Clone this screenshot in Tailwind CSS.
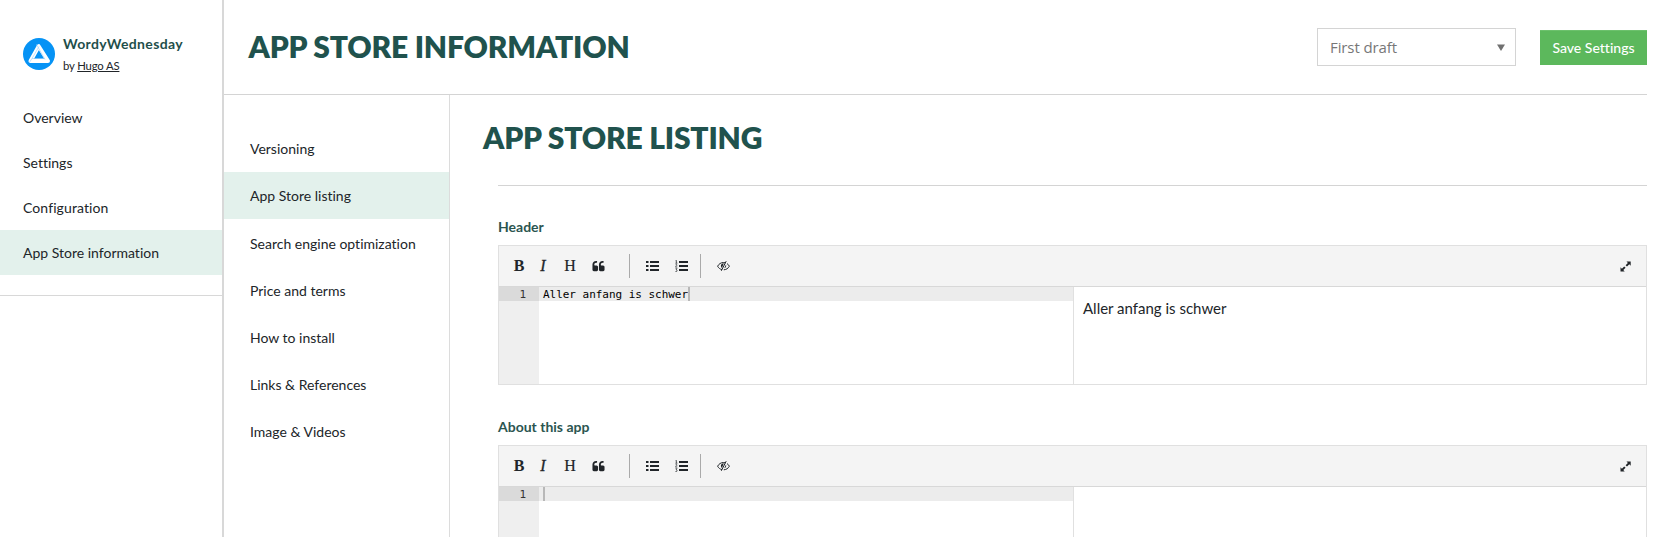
<!DOCTYPE html>
<html lang="en">
<head>
<meta charset="utf-8">
<title>App Store information</title>
<script src="https://cdn.jsdelivr.net/npm/@tailwindcss/browser@4"></script>
</head>
<body class="bg-white font-['Lato',sans-serif] text-[14px] leading-5 text-[#212529] [font-variant-ligatures:none]">
<svg class="hidden">
  <symbol id="quote" viewBox="0 0 1792 1792"><path d="M832 960v384q0 80-56 136t-136 56h-384q-80 0-136-56t-56-136v-704q0-104 40.5-198.5t109.5-163.5 163.5-109.5 198.5-40.5h64q26 0 45 19t19 45v128q0 26-19 45t-45 19h-64q-106 0-181 75t-75 181v32q0 40 28 68t68 28h224q80 0 136 56t56 136zm896 0v384q0 80-56 136t-136 56h-384q-80 0-136-56t-56-136v-704q0-104 40.5-198.5t109.5-163.5 163.5-109.5 198.5-40.5h64q26 0 45 19t19 45v128q0 26-19 45t-45 19h-64q-106 0-181 75t-75 181v32q0 40 28 68t68 28h224q80 0 136 56t56 136z"/></symbol>
  <symbol id="ul" viewBox="0 0 13 12"><path d="M0 1h2.500v2H0zM0 5h2.500v2H0zM0 9h2.500v2H0zM4 1h9v2H4zM4 5h9v2H4zM4 9h9v2H4z"/></symbol>
  <symbol id="ol" viewBox="0 0 13 12"><path d="M4 1h9v2H4zM4 5h9v2H4zM4 9h9v2H4z"/><path fill="none" stroke="currentColor" stroke-width=".7" d="M.5.8 1.400.3v2.900M.4 3.200h2M.5 4.900c.5-.7 1.600-.5 1.600.2 0 .7-1.600 1-1.600 2h1.800M.5 8.700h1.600l-.9 1.100c1.300 0 1.200 1.800 0 1.800H.4"/></symbol>
  <symbol id="eye" viewBox="0 0 13 12"><path fill="none" stroke="currentColor" stroke-width="1" d="M5 9.600C3 9.200 1.500 7.900.6 6.200 1.900 3.900 4 2.500 6.500 2.500c.7 0 1.300.1 1.900.3M10 3.600c1 .6 1.800 1.500 2.400 2.600-1.200 2.200-3.200 3.500-5.600 3.600M9.200 1.200 4.300 10.800"/><path d="M3.900 5.700c0-1.500 1.200-2.500 3-2.500L4.800 7.900c-.6-.6-.9-1.300-.9-2.200zM9 4.400c.6 1.600 0 3.200-1.700 3.900z"/></symbol>
  <symbol id="expand" viewBox="0 0 11 11"><path d="M6.500.5h4.200v4.200L9.300 3.300 7 5.600 5.600 4.200 7.900 1.900zM4.700 10.500H.5V6.300L1.900 7.700 4.200 5.400 5.600 6.800 3.300 9.100z"/></symbol>
</svg>
<div class="flex h-[537px] w-[1661px] overflow-hidden">
  <aside class="w-56 shrink-0 border-r-2 border-[#d8d8d8]">
    <div class="flex h-[95px] gap-2 pt-[34px] pl-[23px]">
      <svg class="mt-1 size-8" viewBox="0 0 32 32"><circle cx="16" cy="16" r="16" fill="#0693f5"/><path d="M15.700 8.200 7.500 23H25Z" fill="none" stroke="#fff" stroke-width="4" stroke-linejoin="round"/><path d="M13.500 6.500 22 21.500M6 25 9 20.500H21.500M9 20.500 16 8.500" fill="none" stroke="#a6d5fb" stroke-width=".7"/></svg>
      <div>
        <div class="h-5 font-bold tracking-[0.35px] text-[#1f4f4b]">WordyWednesday</div>
        <div class="mt-[2px] text-[11.3px] tracking-[-0.15px]">by <span class="underline">Hugo AS</span></div>
      </div>
    </div>
    <nav class="border-b border-[#d8d8d8] pb-5">
      <a class="flex h-[45px] items-center pl-[23px]">Overview</a>
      <a class="flex h-[45px] items-center pl-[23px]">Settings</a>
      <a class="flex h-[45px] items-center pl-[23px] tracking-[0.1px]">Configuration</a>
      <a class="flex h-[45px] items-center bg-[#e3f1ec] pl-[23px]">App Store information</a>
    </nav>
  </aside>
  <main class="mr-[14px] flex min-w-0 grow flex-col">
    <header class="flex h-[95px] shrink-0 items-center border-b border-[#d4d4d4] pl-[24.500px]">
      <h1 class="-mt-[3px] grow text-[30px] leading-10 font-extrabold tracking-[-0.2px] text-[#20524d]">APP STORE INFORMATION</h1>
      <div class="mr-6 flex h-[38px] w-[199px] items-center justify-between border border-[#d4d4d4] pr-[10px] pl-3 font-['Open_Sans',sans-serif] text-[15px] tracking-[-0.1px] text-[#777]">
        <span>First draft</span>
        <svg class="h-[7px] w-2" viewBox="0 0 8 7" fill="#707070"><path d="M0 .5h8L4 7z"/></svg>
      </div>
      <button class="h-[35px] w-[107px] border-t border-[#6cc16c] bg-[#5cb85c] text-[14px] font-medium text-white">Save Settings</button>
    </header>
    <div class="flex min-h-0 grow">
      <nav class="w-[226px] shrink-0 border-r border-[#dcdcdc] pt-[30px]">
        <a class="flex h-[47px] items-center pl-[26px]">Versioning</a>
        <a class="mb-px flex h-[47px] items-center bg-[#e3f1ec] pl-[26px]">App Store listing</a>
        <a class="flex h-[47px] items-center pl-[26px]">Search engine optimization</a>
        <a class="flex h-[47px] items-center pl-[26px]">Price and terms</a>
        <a class="flex h-[47px] items-center pl-[26px]">How to install</a>
        <a class="flex h-[47px] items-center pl-[26px]">Links &amp; References</a>
        <a class="flex h-[47px] items-center pl-[26px]">Image &amp; Videos</a>
      </nav>
      <section class="grow pl-12">
        <h2 class="-ml-[15px] h-[90px] pt-[22px] text-[30px] leading-10 font-extrabold tracking-[-0.2px] text-[#20524d]">APP STORE LISTING</h2>
        <div class="h-8 border-t border-[#d4d4d4]"></div>
        <label class="block h-7 font-bold text-[#2b5550]">Header</label>
        <div class="mb-8 h-[140px] border border-[#e0e0e0]">
          <div class="flex h-[41px] items-center border-b border-[#d8d8d8] bg-[#f4f4f4] font-['Liberation_Serif',serif] text-[16px]">
            <b class="ml-[8px] w-6 text-center">B</b><span class="w-6 text-center italic [-webkit-text-stroke:0.3px_currentColor]">I</span><span class="w-[30px] text-center [-webkit-text-stroke:0.2px_currentColor]">H</span>
            <svg class="ml-[7px] size-[13px]" fill="currentColor"><use href="#quote"/></svg>
            <i class="ml-[24px] h-6 w-px bg-[#aaa]"></i>
            <svg class="ml-4 h-3 w-[13px]" fill="currentColor"><use href="#ul"/></svg>
            <svg class="ml-[16px] h-3 w-[13px]" fill="currentColor"><use href="#ol"/></svg>
            <i class="ml-[12px] h-6 w-px bg-[#aaa]"></i>
            <svg class="ml-[16px] h-3 w-[13px]" fill="currentColor"><use href="#eye"/></svg>
            <svg class="mr-[15px] ml-auto size-[11px]" fill="currentColor"><use href="#expand"/></svg>
          </div>
          <div class="flex h-[97px]">
            <div class="w-10 bg-[#efefef] font-['DejaVu_Sans_Mono',monospace] text-[11px] leading-[15px]"><div class="h-[14px] bg-[#dadada] pr-[13px] text-right text-[#333]">1</div></div>
            <div class="w-[534px] font-['DejaVu_Sans_Mono',monospace] text-[11px] leading-[15px] tracking-[-0.03px] text-black"><div class="flex h-[14px] bg-[#ececec] pl-1"><span>Aller anfang is schwer</span><i class="h-[14px] w-[2px] bg-[#b8b8b8]"></i></div></div>
            <div class="grow border-l border-[#e0e0e0] pt-[11px] pl-[9px] text-[15px]">Aller anfang is schwer</div>
          </div>
        </div>
        <label class="block h-7 font-bold text-[#2b5550]">About this app</label>
        <div class="h-[140px] border border-[#e0e0e0]">
          <div class="flex h-[41px] items-center border-b border-[#d8d8d8] bg-[#f4f4f4] font-['Liberation_Serif',serif] text-[16px]">
            <b class="ml-[8px] w-6 text-center">B</b><span class="w-6 text-center italic [-webkit-text-stroke:0.3px_currentColor]">I</span><span class="w-[30px] text-center [-webkit-text-stroke:0.2px_currentColor]">H</span>
            <svg class="ml-[7px] size-[13px]" fill="currentColor"><use href="#quote"/></svg>
            <i class="ml-[24px] h-6 w-px bg-[#aaa]"></i>
            <svg class="ml-4 h-3 w-[13px]" fill="currentColor"><use href="#ul"/></svg>
            <svg class="ml-[16px] h-3 w-[13px]" fill="currentColor"><use href="#ol"/></svg>
            <i class="ml-[12px] h-6 w-px bg-[#aaa]"></i>
            <svg class="ml-[16px] h-3 w-[13px]" fill="currentColor"><use href="#eye"/></svg>
            <svg class="mr-[15px] ml-auto size-[11px]" fill="currentColor"><use href="#expand"/></svg>
          </div>
          <div class="flex h-[97px]">
            <div class="w-10 bg-[#efefef] font-['DejaVu_Sans_Mono',monospace] text-[11px] leading-[15px]"><div class="h-[14px] bg-[#dadada] pr-[13px] text-right text-[#333]">1</div></div>
            <div class="w-[534px]"><div class="flex h-[14px] bg-[#ececec] pl-1"><i class="h-[14px] w-[2px] bg-[#b8b8b8]"></i></div></div>
            <div class="grow border-l border-[#e0e0e0]"></div>
          </div>
        </div>
      </section>
    </div>
  </main>
</div>
</body>
</html>
